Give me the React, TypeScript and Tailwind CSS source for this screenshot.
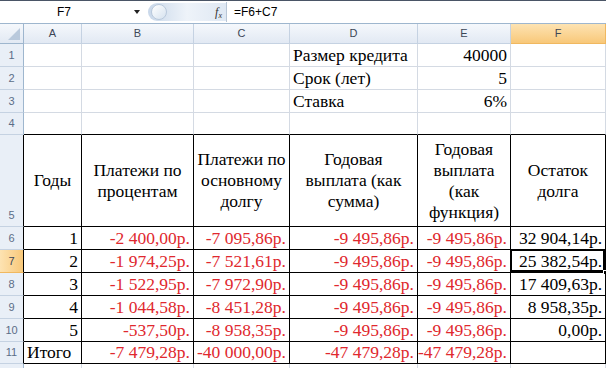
import React from "react";

type Cell = { text?: string; align?: "l" | "r" | "c"; red?: boolean };

const COLS = ["A", "B", "C", "D", "E", "F"];

const money = (s: string): Cell => ({ text: s, align: "r", red: true });

// rows keyed by excel row number, six cells (A..F)
const ROWS: Record<number, Cell[]> = {
  1: [{}, {}, {}, { text: "Размер кредита", align: "l" }, { text: "40000", align: "r" }, {}],
  2: [{}, {}, {}, { text: "Срок (лет)", align: "l" }, { text: "5", align: "r" }, {}],
  3: [{}, {}, {}, { text: "Ставка", align: "l" }, { text: "6%", align: "r" }, {}],
  4: [{}, {}, {}, {}, {}, {}],
  5: [
    { text: "Годы", align: "c" },
    { text: "Платежи по\nпроцентам", align: "c" },
    { text: "Платежи по\nосновному\nдолгу", align: "c" },
    { text: "Годовая\nвыплата (как\nсумма)", align: "c" },
    { text: "Годовая\nвыплата\n(как\nфункция)", align: "c" },
    { text: "Остаток\nдолга", align: "c" },
  ],
  6: [{ text: "1", align: "r" }, money("-2 400,00р."), money("-7 095,86р."), money("-9 495,86р."), money("-9 495,86р."), { text: "32 904,14р.", align: "r" }],
  7: [{ text: "2", align: "r" }, money("-1 974,25р."), money("-7 521,61р."), money("-9 495,86р."), money("-9 495,86р."), { text: "25 382,54р.", align: "r" }],
  8: [{ text: "3", align: "r" }, money("-1 522,95р."), money("-7 972,90р."), money("-9 495,86р."), money("-9 495,86р."), { text: "17 409,63р.", align: "r" }],
  9: [{ text: "4", align: "r" }, money("-1 044,58р."), money("-8 451,28р."), money("-9 495,86р."), money("-9 495,86р."), { text: "8 958,35р.", align: "r" }],
  10: [{ text: "5", align: "r" }, money("-537,50р."), money("-8 958,35р."), money("-9 495,86р."), money("-9 495,86р."), { text: "0,00р.", align: "r" }],
  11: [{ text: "Итого", align: "l" }, money("-7 479,28р."), money("-40 000,00р."), money("-47 479,28р."), money("-47 479,28р."), {}],
  12: [{}, {}, {}, {}, {}, {}],
};

const inTable = (r: number) => r >= 5 && r <= 11;

function FormulaBar() {
  return (
    <div className="flex h-[24px] border-t border-[#4a5566] border-b border-b-[#9eb6ce] bg-white font-['Liberation_Sans','Arial',sans-serif] text-[12px] text-black">
      <div className="relative flex w-[142px] items-center justify-center">
        <span className="-ml-[14px]">F7</span>
        <span className="absolute right-[2px] top-[9px] h-0 w-0 border-x-[3px] border-t-[4px] border-x-transparent border-t-[#222]" />
      </div>
      <div className="my-[2px] ml-[6px] flex w-[78px] items-center rounded-l-full bg-gradient-to-r from-[#c9d8ea] via-[#eef3f9] to-[#dfe8f3] pl-[3px]">
        <span className="h-[16px] w-[16px] rounded-full border border-[#b9c9dc] bg-gradient-to-br from-white to-[#d6e2ef]" />
        <span className="ml-auto mr-[4px] font-['Liberation_Serif',serif] text-[12px] italic text-[#333]">
          f<sub className="text-[8px]">x</sub>
        </span>
      </div>
      <div className="my-[1px] w-px bg-[#b8c6d6]" />
      <div className="flex items-center pl-[7px]">=F6+C7</div>
    </div>
  );
}

function ColHeader({ label }: { label: string }) {
  const active = label === "F";
  return (
    <div
      className={
        active
          ? "flex items-center justify-center border-b border-r border-[#f0b860] bg-gradient-to-b from-[#fde3b2] to-[#f8c879] font-['Liberation_Sans','Arial',sans-serif] text-[11px] text-[#3c4656]"
          : "flex items-center justify-center border-b border-r border-[#c5d2e2] bg-gradient-to-b from-[#f5f8fc] to-[#e2e9f3] font-['Liberation_Sans','Arial',sans-serif] text-[11px] text-[#3c4656]"
      }
    >
      {label}
    </div>
  );
}

function RowHeader({ n }: { n: number }) {
  const active = n === 7;
  const base = "flex items-end justify-center pb-[3px] font-['Liberation_Sans','Arial',sans-serif] text-[11px] border-b";
  const tone = active
    ? " bg-gradient-to-r from-[#fde3b2] to-[#f8c879] border-[#f0b860] text-[#3c4656]"
    : " bg-[#e9eff7] border-b-[#c5d2e2] text-[#5b6d87]";
  const right = inTable(n) ? " border-r border-r-black" : " border-r border-r-[#9eb6ce]";
  return <div className={base + tone + right}>{n < 12 ? n : ""}</div>;
}

function DataCell({ cell, row, col }: { cell: Cell; row: number; col: number }) {
  const borderR = inTable(row) ? "border-r-black" : "border-r-[#d4dae3]";
  const borderB = inTable(row) || row === 4 ? "border-b-black" : "border-b-[#d4dae3]";
  const align =
    cell.align === "r"
      ? "justify-end text-right pr-[3px]"
      : cell.align === "c"
        ? "justify-center text-center px-[2px]"
        : "justify-start text-left pl-[3px]";
  const color = cell.red ? "text-[#e0282e]" : "text-black";
  const selected = row === 7 && col === 5;
  return (
    <div
      className={`relative flex items-center border-r border-b leading-[21px] ${borderR} ${borderB} ${align} ${color}`}
    >
      <span className="whitespace-pre">{cell.text}</span>
      {selected && (
        <>
          <span className="pointer-events-none absolute -left-px -top-px bottom-0 right-0 border-2 border-black" />
          <span className="absolute -bottom-[3px] -right-[3px] h-[5px] w-[5px] border border-white bg-black" />
        </>
      )}
    </div>
  );
}

export default function App() {
  const rows = Object.keys(ROWS).map(Number);
  return (
    <div className="h-[368px] w-[606px] overflow-hidden bg-white">
      <FormulaBar />
      <div className="grid grid-cols-[24px_58px_112px_96px_128px_93px_95px] grid-rows-[20px_23px_23px_23px_22px_92px_23px_23px_23px_23px_23px_22px_23px] font-['Liberation_Serif','Times_New_Roman',serif] text-[17.5px]">
        <div className="relative border-b border-r border-[#9eb6ce] bg-gradient-to-b from-[#f5f8fc] to-[#e2e9f3]">
          <span className="absolute bottom-[3px] right-[3px] h-0 w-0 border-l-[12px] border-l-transparent [border-bottom:12px_solid_#b9c9dc]" />
        </div>
        {COLS.map((c) => (
          <ColHeader key={c} label={c} />
        ))}
        {rows.map((r) => (
          <React.Fragment key={r}>
            <RowHeader n={r} />
            {ROWS[r].map((cell, i) => (
              <DataCell key={i} cell={cell} row={r} col={i} />
            ))}
          </React.Fragment>
        ))}
      </div>
    </div>
  );
}
